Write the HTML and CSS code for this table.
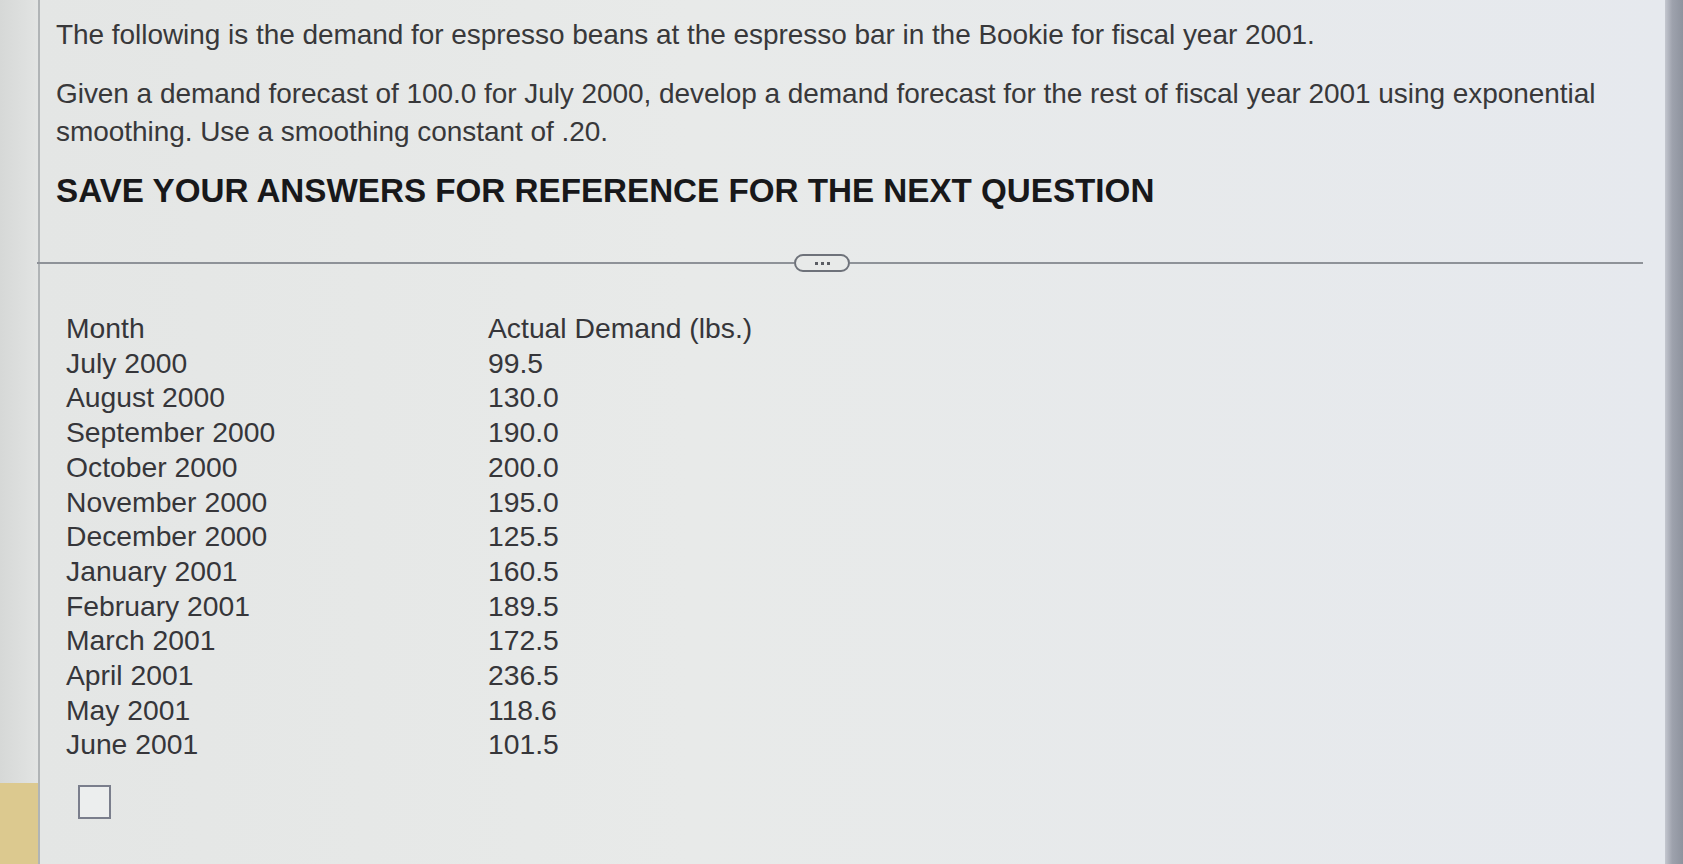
FILE: index.html
```html
<!DOCTYPE html>
<html lang="en">
<head>
<meta charset="utf-8">
<title>Exponential smoothing question</title>
<link rel="stylesheet" href="styles.css">
</head>
<body>
<div class="screen">
  <aside class="side">
    <div class="side-fill"></div>
    <div class="side-tab"></div>
  </aside>
  <main class="panel">
    <p class="para first">The following is the demand for espresso beans at the espresso bar in the Bookie for fiscal year 2001.</p>
    <p class="para">Given a demand forecast of 100.0 for July 2000, develop a demand forecast for the rest of fiscal year 2001 using exponential smoothing. Use a smoothing constant of .20.</p>
    <h2 class="heading">SAVE YOUR ANSWERS FOR REFERENCE FOR THE NEXT QUESTION</h2>
    <div class="divider">
      <span class="rule rule-left"></span>
      <span class="pill"><i></i><i></i><i></i></span>
      <span class="rule rule-right"></span>
    </div>
    <div class="table">
      <div class="cell">Month</div><div class="cell">Actual Demand (lbs.)</div>
      <div class="cell">July 2000</div><div class="cell">99.5</div>
      <div class="cell">August 2000</div><div class="cell">130.0</div>
      <div class="cell">September 2000</div><div class="cell">190.0</div>
      <div class="cell">October 2000</div><div class="cell">200.0</div>
      <div class="cell">November 2000</div><div class="cell">195.0</div>
      <div class="cell">December 2000</div><div class="cell">125.5</div>
      <div class="cell">January 2001</div><div class="cell">160.5</div>
      <div class="cell">February 2001</div><div class="cell">189.5</div>
      <div class="cell">March 2001</div><div class="cell">172.5</div>
      <div class="cell">April 2001</div><div class="cell">236.5</div>
      <div class="cell">May 2001</div><div class="cell">118.6</div>
      <div class="cell">June 2001</div><div class="cell">101.5</div>
    </div>
    <div class="checkbox"></div>
  </main>
  <div class="edge"></div>
</div>
</body>
</html>
```
FILE: styles.css
```css
html, body {
  margin: 0;
  padding: 0;
  height: 100%;
}
body {
  background: #a3a7b1;
  font-family: "Liberation Sans", Arial, sans-serif;
  overflow: hidden;
}
.screen {
  display: flex;
  width: 1683px;
  height: 864px;
}
.side {
  width: 38px;
  flex: 0 0 38px;
  display: flex;
  flex-direction: column;
  background: linear-gradient(90deg, #d6d8d7, #e2e4e3);
  border-right: 2px solid #b0b4b6;
}
.side-fill {
  flex: 1;
}
.side-tab {
  height: 81px;
  background: #dcc98f;
}
.panel {
  flex: 0 0 1625px;
  background: linear-gradient(90deg, #e4e6e5 0%, #e8eae9 40%, #e6e9ee 100%);
  padding: 16px 0 0 16px;
  box-sizing: border-box;
  color: #38383a;
}
.edge {
  flex: 1;
  background: linear-gradient(90deg, #c4c7cf, #9ea2ad 40%, #8e939e);
}
.para {
  margin: 0 0 21px 0;
  font-size: 28px;
  line-height: 38px;
  width: 1580px;
  letter-spacing: -0.05px;
}
.heading {
  margin: 2px 0 0 0;
  font-size: 33.2px;
  line-height: 38px;
  font-weight: bold;
  color: #18181a;
}
.divider {
  display: flex;
  align-items: center;
  margin: 44px 0 0 -19px;
  width: 1606px;
  height: 18px;
}
.rule {
  height: 2px;
  background: #8e9298;
}
.rule-left {
  flex: 0 0 757px;
}
.rule-right {
  flex: 1;
}
.pill {
  flex: 0 0 auto;
  width: 52px;
  height: 14px;
  border: 2px solid #6e727a;
  border-radius: 9px;
  background: #e8eae9;
  display: flex;
  align-items: center;
  justify-content: center;
  gap: 3px;
}
.pill i {
  width: 3px;
  height: 3px;
  background: #5a5d63;
  display: block;
}
.table {
  display: grid;
  grid-template-columns: 422px auto;
  margin: 39px 0 0 10px;
  font-size: 28.3px;
  line-height: 34.7px;
  color: #36363a;
}
.cell {
  white-space: nowrap;
}
.checkbox {
  margin: 23px 0 0 22px;
  width: 29px;
  height: 30px;
  border: 2px solid #7a7e8c;
  background: #eceeee;
}
```
